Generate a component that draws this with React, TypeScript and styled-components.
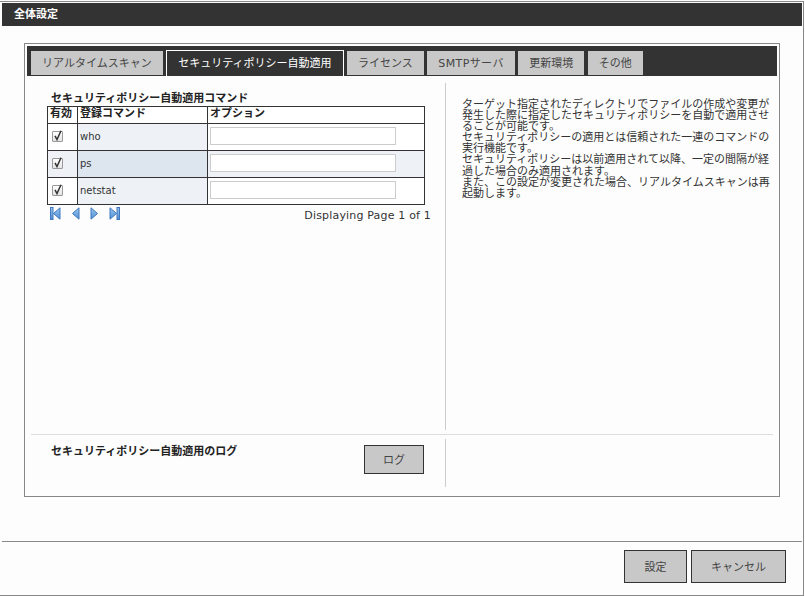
import React from "react";
import styled, { createGlobalStyle } from "styled-components";

const tabs = ["リアルタイムスキャン", "セキュリティポリシー自動適用", "ライセンス", "SMTPサーバ", "更新環境", "その他"];
const commands = ["who", "ps", "netstat"];

const GlobalStyle = createGlobalStyle`
  html, body {
    margin: 0;
    padding: 0;
    background: #fdfdfd;
    overflow: hidden;
  }
  body {
    font-family: "DejaVu Sans", "Noto Sans CJK JP", sans-serif;
    font-size: 11px;
    color: #333;
  }
`;

const Frame = styled.div`
  box-sizing: border-box;
  width: 804px;
  height: 595px;
  margin-top: 1px;
  padding: 1px 1px 0 2px;
  border-top: 1px solid #888;
  border-right: 1px solid #888;
  border-bottom: 1px solid #888;
  background: #fdfdfd;
`;

const TitleBar = styled.h1`
  box-sizing: border-box;
  height: 23px;
  margin: 0;
  padding-left: 12px;
  background: #333;
  color: #fff;
  font-size: 11px;
  font-weight: bold;
  line-height: 23px;
`;

const Panel = styled.div`
  box-sizing: border-box;
  width: 756px;
  height: 454px;
  margin: 17px 0 0 22px;
  padding: 2px;
  border: 1px solid #888;
`;

const TabStrip = styled.div`
  display: flex;
  align-items: flex-end;
  gap: 3.5px;
  box-sizing: border-box;
  height: 30px;
  padding: 0 0 1px 4px;
  background: #333;
`;

const Tab = styled.div<{ $active?: boolean; $latin?: boolean }>`
  box-sizing: border-box;
  height: ${({ $active }) => ($active ? "26px" : "24px")};
  margin-bottom: ${({ $active }) => ($active ? "-1px" : "0")};
  padding: 0 11px;
  border: ${({ $active }) => ($active ? "1px solid #fff" : "none")};
  border-bottom: none;
  background: ${({ $active }) => ($active ? "#333" : "#c8c8c8")};
  color: ${({ $active }) => ($active ? "#fff" : "#444")};
  font-size: 11px;
  letter-spacing: ${({ $latin }) => ($latin ? "0.4px" : "0")};
  line-height: 25px;
  white-space: nowrap;
`;

const Section = styled.div<{ $height: number }>`
  display: grid;
  grid-template-columns: 414px 1fr;
  height: ${({ $height }) => $height}px;
  margin: 0 4px;
`;

const MainSection = styled(Section)`
  margin-top: 7px;
`;

const LeftCell = styled.div`
  box-sizing: border-box;
  padding: 8px 14px 0 16px;
`;

const RightCell = styled.div`
  box-sizing: border-box;
  padding: 16px 0 0 16px;
  border-left: 1px solid #ccc;
`;

const Heading = styled.h2`
  margin: 0 0 0 4px;
  color: #222;
  font-size: 11px;
  font-weight: bold;
  line-height: 15px;
`;

const LogHeading = styled(Heading)`
  margin: 5px 0 0 16px;
`;

const Table = styled.table`
  width: 377px;
  border-collapse: collapse;
  table-layout: fixed;
`;

const HeadCell = styled.th`
  height: 15px;
  padding: 1px 0 0 2px;
  border: 1px solid #333;
  background: #fff;
  color: #222;
  font-size: 11px;
  font-weight: bold;
  line-height: 11px;
  text-align: left;
  vertical-align: top;
`;

const Cell = styled.td<{ $bg: string }>`
  height: 24px;
  padding: 0 0 2px 2px;
  border: 1px solid #333;
  background: ${({ $bg }) => $bg};
  font-size: 10px;
`;

const CheckCell = styled(Cell)`
  padding-left: 4px;
`;

const CheckBox = styled.span`
  display: block;
  box-sizing: border-box;
  width: 11px;
  height: 11px;
  border: 1px solid #999;
  border-radius: 1px;
  background: linear-gradient(#fff, #e4e4e4);
  svg {
    display: block;
    overflow: visible;
  }
`;

const OptionInput = styled.input`
  display: block;
  box-sizing: border-box;
  width: 186px;
  height: 18px;
  margin: 0;
  padding: 0 2px;
  border: 1px solid #ccc;
  background: #fff;
`;

const Pager = styled.div`
  display: flex;
  align-items: flex-start;
  justify-content: space-between;
  padding: 2px 0 0 3px;
`;

const PagerIcons = styled.div`
  display: flex;
  gap: 10px;
  svg {
    display: block;
  }
`;

const PagerText = styled.span`
  margin-top: 2px;
  font-size: 11px;
  letter-spacing: 0.18px;
`;

const Description = styled.p`
  width: 312px;
  margin: 0;
  color: #333;
  font-size: 11px;
  line-height: 11.1px;
`;

const Divider = styled.hr`
  height: 1px;
  margin: 4px;
  border: none;
  background: #ddd;
`;

const LogRow = styled.div`
  display: flex;
  align-items: flex-start;
  justify-content: space-between;
  padding: 0 21px 0 4px;
`;

const Button = styled.button<{ $width: number; $height: number }>`
  box-sizing: border-box;
  width: ${({ $width }) => $width}px;
  height: ${({ $height }) => $height}px;
  margin: 0;
  padding: 0 0 1px;
  border: 1px solid #333;
  border-radius: 0;
  background: #c8c8c8;
  color: #444;
  font-family: inherit;
  font-size: 11px;
`;

const LogButton = styled(Button)`
  margin-top: 6px;
`;

const Footer = styled.div`
  display: flex;
  justify-content: flex-end;
  gap: 4px;
  margin-top: 44px;
  padding: 8px 16px 0 0;
  border-top: 1px solid #888;
`;

const Check = () => (
  <CheckBox>
    <svg width="9" height="9" viewBox="0 0 9 9">
      <path d="M2 3.8 L4 7.5 L8 -1.2" fill="none" stroke="#333" strokeWidth="1.5" />
    </svg>
  </CheckBox>
);

const PagerIcon = ({ dir, bar }: { dir: "left" | "right"; bar?: boolean }) => {
  const flip = dir === "right" ? "translate(11 0) scale(-1 1)" : undefined;
  const box = bar ? "0 0 11 13" : dir === "left" ? "2 0 9 13" : "0 0 9 13";
  return (
    <svg width={bar ? 11 : 9} height="13" viewBox={box}>
      <defs>
        <linearGradient id="pagerBlue" x1="0" y1="0" x2="0" y2="1">
          <stop offset="0" stopColor="#9cc6ee" />
          <stop offset="1" stopColor="#4f8fd6" />
        </linearGradient>
      </defs>
      <g transform={flip} fill="url(#pagerBlue)" stroke="#3f78bd" strokeWidth="1">
        {bar && <rect x="0.5" y="0.5" width="2.5" height="12" />}
        <path d="M10 0.8 V12.2 L3.5 6.5 Z" />
      </g>
    </svg>
  );
};

const App = () => {
  return (
    <>
      <GlobalStyle />
      <Frame>
        <TitleBar>全体設定</TitleBar>
        <Panel>
          <TabStrip>
            {tabs.map((tab, index) => (
              <Tab key={tab} $active={index === 1} $latin={tab.startsWith("SMTP")}>
                {tab}
              </Tab>
            ))}
          </TabStrip>
          <MainSection $height={347}>
            <LeftCell>
              <Heading>セキュリティポリシー自動適用コマンド</Heading>
              <Table>
                <colgroup>
                  <col width="30" />
                  <col width="130" />
                  <col width="217" />
                </colgroup>
                <thead>
                  <tr>
                    <HeadCell>有効</HeadCell>
                    <HeadCell>登録コマンド</HeadCell>
                    <HeadCell>オプション</HeadCell>
                  </tr>
                </thead>
                <tbody>
                  {commands.map((command, index) => {
                    const odd = index % 2 === 1;
                    return (
                      <tr key={command}>
                        <CheckCell $bg={odd ? "#eef2f7" : "#fff"}>
                          <Check />
                        </CheckCell>
                        <Cell $bg={odd ? "#dde6ee" : "#eef2f7"}>{command}</Cell>
                        <Cell $bg={odd ? "#eef2f7" : "#fff"}>
                          <OptionInput />
                        </Cell>
                      </tr>
                    );
                  })}
                </tbody>
              </Table>
              <Pager>
                <PagerIcons>
                  <PagerIcon dir="left" bar />
                  <PagerIcon dir="left" />
                  <PagerIcon dir="right" />
                  <PagerIcon dir="right" bar />
                </PagerIcons>
                <PagerText>Displaying Page 1 of 1</PagerText>
              </Pager>
            </LeftCell>
            <RightCell>
              <Description>
                ターゲット指定されたディレクトリでファイルの作成や変更が発生した際に指定したセキュリティポリシーを自動で適用させることが可能です。
                <br />
                セキュリティポリシーの適用とは信頼された一連のコマンドの実行機能です。
                <br />
                セキュリティポリシーは以前適用されて以降、一定の間隔が経過した場合のみ適用されます。
                <br />
                また、この設定が変更された場合、リアルタイムスキャンは再起動します。
              </Description>
            </RightCell>
          </MainSection>
          <Divider />
          <Section $height={48}>
            <LogRow>
              <LogHeading>セキュリティポリシー自動適用のログ</LogHeading>
              <LogButton $width={60} $height={29}>
                ログ
              </LogButton>
            </LogRow>
            <RightCell />
          </Section>
        </Panel>
        <Footer>
          <Button $width={63} $height={33}>設定</Button>
          <Button $width={95} $height={33}>キャンセル</Button>
        </Footer>
      </Frame>
    </>
  );
};

export default App;
